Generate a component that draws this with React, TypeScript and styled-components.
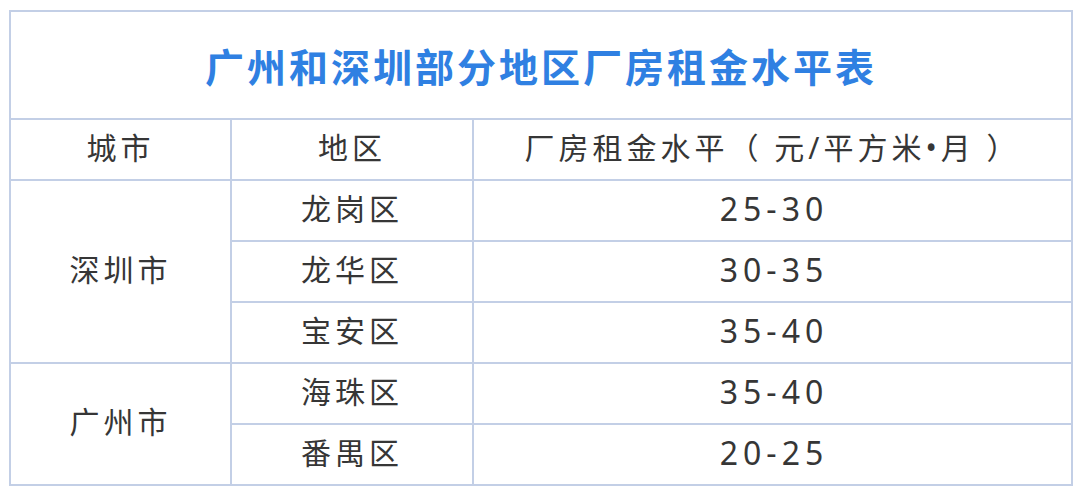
import React from "react";
import styled, { createGlobalStyle } from "styled-components";

interface IRow {
  city?: string;
  span?: number;
  district: string;
  rent: string;
}

const rows: IRow[] = [
  { city: "深圳市", span: 3, district: "龙岗区", rent: "25-30" },
  { district: "龙华区", rent: "30-35" },
  { district: "宝安区", rent: "35-40" },
  { city: "广州市", span: 2, district: "海珠区", rent: "35-40" },
  { district: "番禺区", rent: "20-25" }
];

const GlobalStyle = createGlobalStyle`
  body {
    margin: 0;
    background: #ffffff;
    font-family: "Noto Sans CJK SC", "Noto Sans", sans-serif;
  }
`;

const Page = styled.div`
  width: 1080px;
  height: 495px;
  padding: 10px 0 0 9px;
  box-sizing: border-box;
  background: #ffffff;
`;

const Table = styled.table`
  width: 1062px;
  border-collapse: collapse;
  table-layout: fixed;
  border: 2px solid #c3cfe6;
`;

const Title = styled.th`
  height: 106px;
  padding: 0;
  color: #2f80e2;
  font-size: 39px;
  font-weight: 700;
  letter-spacing: 3px;
  text-align: center;
  border: 2px solid #c3cfe6;
`;

const Cell = styled.td<{ $num?: boolean }>`
  height: 55px;
  padding: 0 0 4px ${p => (p.$num ? "3px" : "0")};
  color: #363636;
  font-size: ${p => (p.$num ? "32px" : "30px")};
  line-height: 36px;
  font-family: "Noto Sans", "Noto Sans CJK SC", sans-serif;
  letter-spacing: ${p => (p.$num ? "5px" : "4px")};
  text-align: center;
  vertical-align: middle;
  border: 2px solid #c3cfe6;
`;

const App: React.FC = () => {
  return (
    <>
      <GlobalStyle />
      <Page>
        <Table>
          <colgroup>
            <col style={{ width: 221 }} />
            <col style={{ width: 242 }} />
            <col style={{ width: 599 }} />
          </colgroup>
          <thead>
            <tr>
              <Title colSpan={3}>广州和深圳部分地区厂房租金水平表</Title>
            </tr>
          </thead>
          <tbody>
            <tr>
              <Cell>城市</Cell>
              <Cell>地区</Cell>
              <Cell>厂房租金水平（ 元/平方米•月 ）</Cell>
            </tr>
            {rows.map(r => (
              <tr key={r.district}>
                {r.city && <Cell rowSpan={r.span}>{r.city}</Cell>}
                <Cell>{r.district}</Cell>
                <Cell $num>{r.rent}</Cell>
              </tr>
            ))}
          </tbody>
        </Table>
      </Page>
    </>
  );
};

export default App;
